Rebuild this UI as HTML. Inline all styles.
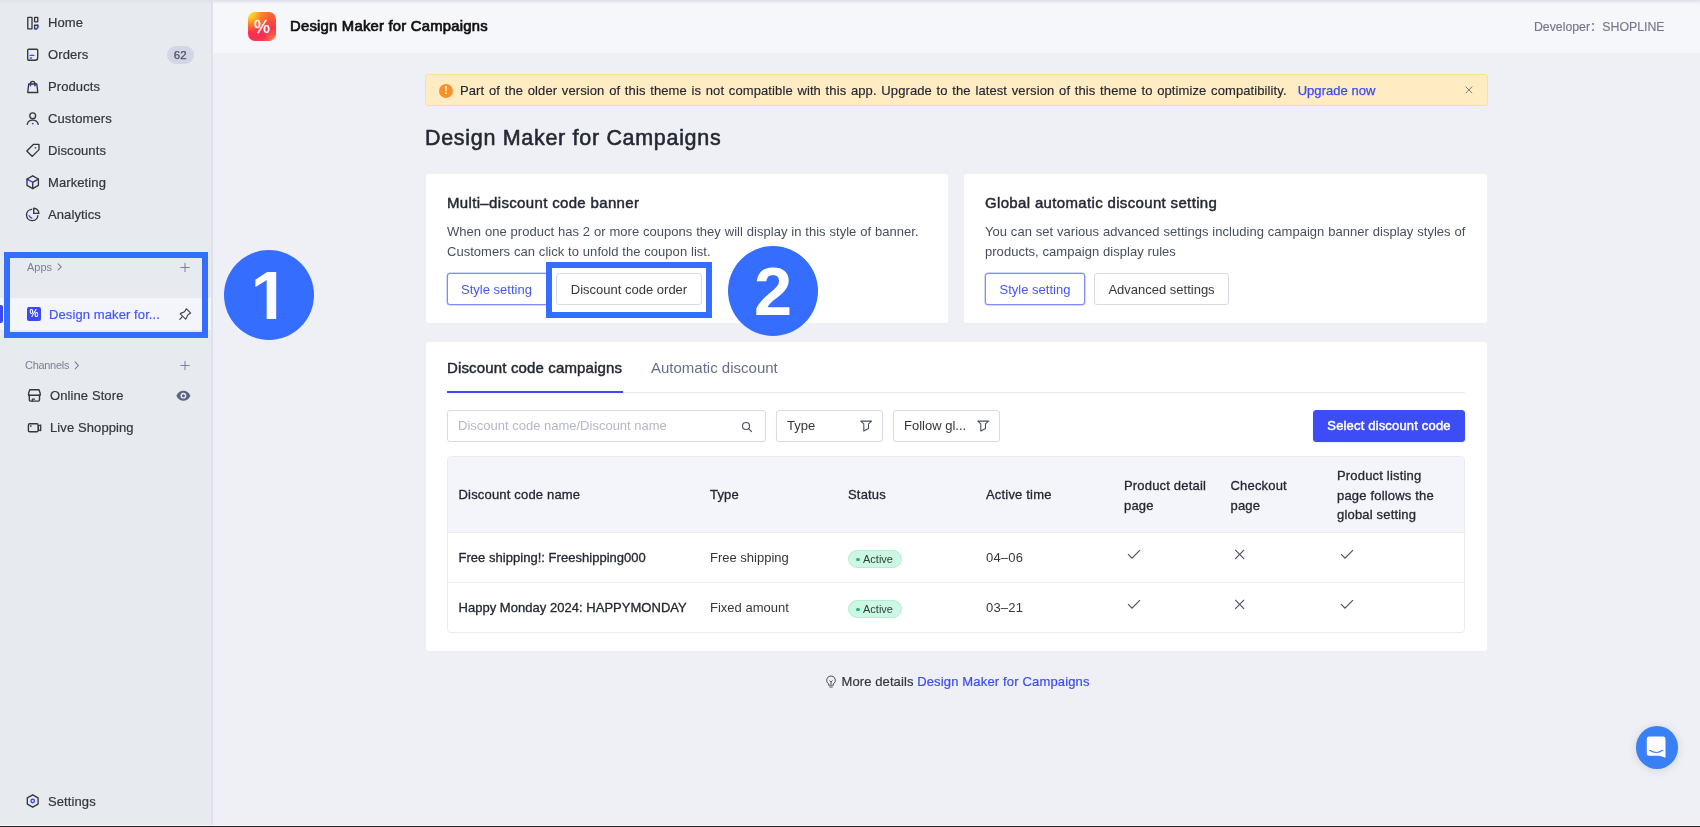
<!DOCTYPE html>
<html lang="en">
<head>
<meta charset="utf-8">
<title>Design Maker for Campaigns</title>
<style>
*{box-sizing:border-box;margin:0;padding:0}
html,body{width:1700px;height:827px;overflow:hidden}
body{font-family:"Liberation Sans","Noto Sans CJK SC",sans-serif;background:#eff0f5;color:#242833;font-size:13px;position:relative;will-change:transform}
a{text-decoration:none;color:#3a4af5}
.abs{position:absolute}
.m{font-weight:normal!important;-webkit-text-stroke:.3px currentColor}
/* sidebar */
#side{position:absolute;left:0;top:0;width:213px;height:827px;background:#e7eaef;border-right:2px solid #dfe1ee}
.badge{position:absolute;left:166.5px;top:46px;width:27.5px;height:18px;border-radius:9px;background:#d3d6e6;color:#4a5063;font-size:11.5px;text-align:center;line-height:19px;-webkit-text-stroke:.25px #4a5063}
.sec{position:absolute;font-size:11px;color:#7a8094}
#active{position:absolute;left:0;top:298px;width:211px;height:32px;background:#f4f5fa}
#activebar{position:absolute;left:0;top:305px;width:3px;height:18px;background:#3a4af5;border-radius:0 2px 2px 0}
.navt{position:absolute;left:48px;height:20px;line-height:20px;font-size:13px;color:#33373f;white-space:nowrap;-webkit-text-stroke:.2px currentColor;letter-spacing:.1px}
#mini{position:absolute;left:27px;top:307px;width:14px;height:14px;border-radius:2px;background:#3a4af5;color:#fff;font-size:10px;font-weight:bold;text-align:center;line-height:14px}
/* header */
#hdr{position:absolute;left:213px;top:0;width:1487px;height:53px;background:#f6f7fb}
#topshade{position:absolute;left:0;top:0;width:1700px;height:4px;background:linear-gradient(#dfe1e8,rgba(223,225,232,0));}
#appicon{position:absolute;left:248px;top:12px;width:28px;height:29px;border-radius:7px;background:radial-gradient(circle at 6% 4%,#ffe52e 0,#ffc02a 14%,rgba(255,150,40,.6) 30%,rgba(255,120,40,0) 50%),radial-gradient(circle at 100% 100%,#ffa03c 0,rgba(255,130,60,.6) 15%,rgba(255,120,60,0) 32%),linear-gradient(172deg,#f9782b 0,#f6553a 35%,#f7384a 55%,#fb2d55 78%,#f8404a 100%);color:#fff;font-size:18px;text-align:center;line-height:31px;-webkit-text-stroke:.3px #fff}
#hdr h1{position:absolute;left:77px;top:17px;font-size:14.8px;line-height:18px;color:#111;letter-spacing:.24px;-webkit-text-stroke-width:.7px!important}
#dev{position:absolute;right:35.5px;top:18px;-webkit-text-stroke:.15px #73788c;font-size:12.3px;line-height:18px;color:#73788c}
/* content */
#alert{position:absolute;left:425px;top:74px;width:1063px;height:32px;background:#ffecc3;border:1px solid #ffdf9e;border-radius:3px}
#alert .ic{position:absolute;left:13px;top:8.5px;width:14px;height:14px;border-radius:50%;background:#f8912a;color:#fff;font-size:10px;font-weight:bold;text-align:center;line-height:14px}
#alert .tx{position:absolute;left:34px;top:8px;font-size:13px;color:#23262f;-webkit-text-stroke:.15px #23262f;white-space:nowrap;letter-spacing:.1px;word-spacing:.98px}
#alert .x{position:absolute;right:13.5px;top:10px;width:10px;height:10px}
h2{position:absolute;left:425px;top:125px;font-size:21.5px;line-height:26px;color:#242833;letter-spacing:.69px;-webkit-text-stroke-width:.55px!important}
.card{position:absolute;background:#fff;border-radius:3px}
.card h3{position:absolute;left:21px;top:20px;font-size:15px;color:#242833;letter-spacing:.34px;-webkit-text-stroke-width:.45px!important;white-space:nowrap}
.card p{position:absolute;left:21px;letter-spacing:.03px;word-spacing:.2px;top:48px;font-size:13px;line-height:20px;color:#474f5e;white-space:nowrap}
.btn{position:absolute;height:32px;border:1px solid #d7dbe7;border-radius:3px;background:#fff;font-size:13px;line-height:32px;text-align:center;color:#33373f;white-space:nowrap}
.btn.pri{border-color:#7f8cfa;color:#4556f6;box-shadow:0 0 0 .5px #aab2fc}
.btn.solid{background:#3c4df6;border-color:#3c4df6;color:#fff;letter-spacing:.17px;-webkit-text-stroke-width:.45px!important;box-shadow:0 1px 2px rgba(58,74,245,.12)}
.inp{position:absolute;top:68px;height:32px;border:1px solid #d7dbe7;border-radius:3px;background:#fff;font-size:13px;line-height:30px;padding-left:10px;color:#33373f;white-space:nowrap}
#tbl{position:absolute;left:21px;top:114px;width:1018px;height:177px;border:1px solid #eaecf2;border-radius:4px;overflow:hidden}
.thead{position:absolute;left:0;top:0;width:1017px;height:75px;background:#f3f5fa}
.row{height:50px;border-top:1px solid #eaecf2}
.cell{line-height:20px;color:#33373f}
.cell.h{color:#242833;font-size:13px;letter-spacing:.18px;line-height:19.600px}
.cell.b{color:#242833;font-size:13px;letter-spacing:.03px}
#foot{position:absolute;left:824.500px;top:672px;font-size:13px;line-height:20px;color:#33373f;white-space:nowrap}
#chat{position:absolute;left:1635.500px;top:726px;width:42.600px;height:42.600px;border-radius:50%;background:#3880f4;box-shadow:0 1px 10px rgba(0,0,0,.12)}
#chat svg{position:absolute;left:-.6px;top:0}
/* annotations */
.hl{position:absolute;border:6px solid #356dff}
.circ{position:absolute;width:90px;height:90px;border-radius:50%;background:#356dff;color:#fff;font-weight:bold;font-size:68.5px;text-align:center;line-height:92px}
/* table */
#tabs .t{position:absolute;top:17px;font-size:15px;white-space:nowrap}
.row{position:absolute;left:0;width:1017px}
.cell{position:absolute;white-space:nowrap;font-size:13px}
.tag{position:absolute;left:400px;width:54px;height:18px;border-radius:9px;background:#cdf6e3;border:1px solid #b4eed4;color:#2a4038;font-size:11px;line-height:16px;padding-left:14px}
.tag:before{content:"";position:absolute;left:7px;top:6.5px;width:3.5px;height:3.5px;border-radius:50%;background:#22b573}
#bottomline{position:absolute;left:0;top:825px;width:1700px;height:2px;background:#242424;border-top:1px solid #f6f7fb}
</style>
</head>
<body>
<div id="side"></div>
<div id="active"></div><div id="activebar"></div>
<svg class="abs" style="left:0;top:0" width="212" height="827" viewBox="0 0 212 827" fill="none" stroke="#33373f" stroke-width="1.35" stroke-linejoin="round" stroke-linecap="round">
<!-- home -->
<rect x="27.8" y="17.3" width="4.2" height="11.6" rx=".5"/>
<rect x="34.6" y="17.3" width="3.2" height="4.6" rx=".4"/>
<path d="M37.8 25.2V26.4" /><path d="M37.8 25.2H34.6V28.9H36.2" />
<path d="M38 26.2q0 2.6-2.4 2.7" stroke="#3a4af5" stroke-width="1.6"/>
<!-- orders -->
<path d="M28.6 49.2h8.2q.9 0 .9.9v7.6q0 2.5-2.5 2.5h-6.6q-.9 0-.9-.9v-9.2q0-.9.9-.9z"/>
<path d="M30.2 55.4h3.6" stroke="#3a4af5" stroke-width="1.3"/><path d="M30.4 57.9h1" stroke="#3a4af5" stroke-width="1.5"/>
<!-- products -->
<path d="M28.7 84h8.1l1 8.5h-10.1z"/><path d="M30.5 85.6v-2.1a2.2 2.2 0 0 1 4.4 0v2.1"/>
<path d="M30.4 85.2v.6M35 85.2v.6" stroke="#3a4af5" stroke-width="1.4"/>
<!-- customers -->
<circle cx="32.7" cy="115.8" r="2.9"/><path d="M27.2 124.3c.5-2.6 2.6-4.2 5.5-4.200s5 1.600 5.500 4.200"/>
<circle cx="32.7" cy="123.600" r=".9" fill="#3a4af5" stroke="none"/>
<!-- discounts -->
<path d="M33.6 144.300h5.400v5.300l-6.700 6.800-5.500-5.500z"/><circle cx="35.400" cy="147.800" r=".9" fill="#3a4af5" stroke="none"/>
<!-- marketing -->
<path d="M32.700 175.800l5.700 3.200v6.400l-5.700 3.300-5.700-3.300v-6.400z"/><path d="M38.300 179.100l-5.600 3.200v6.200"/><path d="M27.400 179.300l5.200 2.900" stroke="#3a4af5"/><path d="M27.200 179.200l.8.450"/>
<!-- analytics -->
<path d="M31.600 209.300a5.700 5.700 0 1 0 6.300 6.300"/><path d="M33.700 208.200a5.200 5.200 0 0 1 5.200 5.200h-5.200z"/>
<path d="M29.100 215.700q.9 1.900 2.700 2.500" stroke="#3a4af5"/>
<!-- settings -->
<path d="M32.700 794.800l5.400 3.100v6.200l-5.400 3.100-5.400-3.100v-6.200z"/><circle cx="32.700" cy="801" r="1.700" stroke="#3a4af5" stroke-width="1.400"/>
<!-- online store -->
<path d="M29.800 389.800h9.200l1.200 3.600v1.800h-11.600v-1.800z" stroke-width="1.400"/><path d="M29.300 395.300v4.800q0 1 1 1h8.200q1 0 1-1v-4.800" stroke-width="1.400"/><path d="M32.300 401v-1.800h2.200" stroke-width="1.300"/>
<!-- live -->
<rect x="28.400" y="423.800" width="9.800" height="8" rx="1.400" stroke-width="1.400"/><path d="M38.400 425.800l2.300-.8v5.600l-2.300-.8z" stroke-width="1.300"/><path d="M30.500 426h.6" stroke-width="1.300"/>
<!-- chevrons + plus -->
<g stroke="#7a8094" stroke-width="1.100"><path d="M58.200 263.800l3 3-3 3"/><path d="M75.200 362l3.200 3.400-3.200 3.400"/>
<path d="M185 263.300v8.400M180.800 267.500h8.400" stroke-width="1"/><path d="M185 361.300v8.400M180.800 365.500h8.400" stroke-width="1"/></g>
<!-- pin -->
<path d="M186.300 308.700L190.700 313.100Q187.500 314.600 187.100 316.300Q186.900 317.900 185.700 319.100L180.200 313.800Q181.600 312.700 183.200 312.400Q184.900 312 186.300 308.700Z" stroke="#3c414d" stroke-width="1.100"/><path d="M182.100 316.900l-2.300 2.500" stroke="#3c414d" stroke-width="1.200"/>
<!-- eye -->
<path d="M176.400 395.700c1.500-3.200 4-5 7-5s5.500 1.800 7 5c-1.500 3.200-4 5-7 5s-5.500-1.800-7-5z" fill="#5d6480" stroke="none"/><circle cx="183.400" cy="395.700" r="2.900" fill="#e8eaf0" stroke="none"/><circle cx="183.400" cy="395.700" r="1.500" fill="#5d6480" stroke="none"/>
</svg>
<div class="navt" style="top:13px">Home</div>
<div class="navt" style="top:45px">Orders</div>
<div class="badge">62</div>
<div class="navt" style="top:77px">Products</div>
<div class="navt" style="top:109px">Customers</div>
<div class="navt" style="top:141px">Discounts</div>
<div class="navt" style="top:173px">Marketing</div>
<div class="navt" style="top:205px">Analytics</div>
<div class="sec" style="left:27px;top:261px">Apps</div>
<div id="mini">%</div>
<div class="navt" style="left:49px;top:305px;color:#4556f6;">Design maker for...</div>
<div class="sec" style="left:25px;top:359px;letter-spacing:-.3px">Channels</div>
<div class="navt" style="left:50px;top:386px">Online Store</div>
<div class="navt" style="left:50px;top:418px">Live Shopping</div>
<div class="navt" style="top:792px">Settings</div>
<div id="hdr">
  <h1 class="m">Design Maker for Campaigns</h1>
  <div id="dev">Developer：SHOPLINE</div>
</div>
<div id="appicon">%</div>
<div id="alert"><div class="ic">!</div><div class="tx">Part of the older version of this theme is not compatible with this app. Upgrade to the latest version of this theme to optimize compatibility.<a style="margin-left:11px;letter-spacing:.05px;word-spacing:0;-webkit-text-stroke:.25px #3a4af5">Upgrade now</a></div>
<svg class="x" viewBox="0 0 10 10"><path d="M1.600 1.600l6.600 6.600M8.200 1.600l-6.600 6.600" stroke="#70747f" stroke-width=".95" fill="none"/></svg></div>
<h2 class="m">Design Maker for Campaigns</h2>
<div class="card" style="left:426px;top:174px;width:522px;height:149px">
 <h3 class="m">Multi–discount code banner</h3>
 <p>When one product has 2 or more coupons they will display in this style of banner.<br>Customers can click to unfold the coupon list.</p>
 <div class="btn pri" style="left:21px;top:99px;width:101px;padding-right:2px">Style setting</div>
 <div class="btn" style="left:130px;top:99px;width:146px">Discount code order</div>
</div>
<div class="card" style="left:964px;top:174px;width:523px;height:149px">
 <h3 class="m">Global automatic discount setting</h3>
 <p>You can set various advanced settings including campaign banner display styles of<br>products, campaign display rules</p>
 <div class="btn pri" style="left:21px;top:99px;width:100px">Style setting</div>
 <div class="btn" style="left:130px;top:99px;width:135px">Advanced settings</div>
</div>
<div class="card" id="tcard" style="left:426px;top:342px;width:1061px;height:309px">
 <div id="tabs">
  <div class="t m" style="left:21px;letter-spacing:.15px;-webkit-text-stroke-width:.45px!important;color:#242833">Discount code campaigns</div>
  <div class="t" style="left:225px;color:#676e8b">Automatic discount</div>
  <div class="abs" style="left:21px;top:50px;width:1018px;height:1px;background:#e8eaf0"></div>
  <div class="abs" style="left:21px;top:49px;width:176px;height:2px;background:#3a4af5"></div>
 </div>
 <div class="inp" style="left:21px;width:319px"><span style="color:#b3b8c8">Discount code name/Discount name</span>
  <svg class="abs" style="left:292.5px;top:9.5px" width="12" height="12" viewBox="0 0 12 12" fill="none" stroke="#4b5163" stroke-width="1.150"><circle cx="5" cy="5" r="3.500"/><path d="M7.600 7.600l3 3" stroke-linecap="round"/></svg></div>
 <div class="inp" style="left:350px;width:107px"><span>Type</span>
  <svg class="abs flt" style="left:83px;top:9px" width="13" height="13" viewBox="0 0 13 13" fill="none" stroke="#4b5163" stroke-width="1.100" stroke-linejoin="round"><path d="M.8 1.100h10.800l-3.100 2.700v4.700l-4.700 2.600v-7.300z"/></svg></div>
 <div class="inp" style="left:467px;width:107px"><span>Follow gl...</span>
  <svg class="abs flt" style="left:83px;top:9px" width="13" height="13" viewBox="0 0 13 13" fill="none" stroke="#4b5163" stroke-width="1.100" stroke-linejoin="round"><path d="M.8 1.100h10.800l-3.100 2.700v4.700l-4.700 2.600v-7.300z"/></svg></div>
 <div class="btn solid m" style="left:887px;top:68px;width:152px;height:32px;line-height:30px">Select discount code</div>
 <div id="tbl">
  <div class="thead">
   <div class="cell h m" style="left:10.5px;top:28px">Discount code name</div>
   <div class="cell h m" style="left:262px;top:28px">Type</div>
   <div class="cell h m" style="left:400px;top:28px">Status</div>
   <div class="cell h m" style="left:538px;top:28px">Active time</div>
   <div class="cell h m" style="left:676px;top:19px">Product detail<br>page</div>
   <div class="cell h m" style="left:782.5px;top:19px">Checkout<br>page</div>
   <div class="cell h m" style="left:889px;top:9px">Product listing<br>page follows the<br>global setting</div>
  </div>
  <div class="row" style="top:75px">
   <div class="cell b m" style="left:10.5px;top:15px">Free shipping!: Freeshipping000</div>
   <div class="cell" style="left:262px;top:15px">Free shipping</div>
   <div class="tag" style="top:17px">Active</div>
   <div class="cell" style="left:538px;top:15px"><span style="letter-spacing:.2px">04–06</span></div>
   <svg class="abs" style="left:679px;top:16px" width="14" height="11" viewBox="0 0 14 11"><path d="M1 5.200l4 4 8-8" fill="none" stroke="#4b5163" stroke-width="1.200"/></svg>
   <svg class="abs" style="left:786px;top:16px" width="12" height="11" viewBox="0 0 12 11"><path d="M1.200 .900l8.900 8.900M10.100 .900l-8.900 8.900" fill="none" stroke="#4b5163" stroke-width="1.150"/></svg>
   <svg class="abs" style="left:892px;top:16px" width="14" height="11" viewBox="0 0 14 11"><path d="M1 5.200l4 4 8-8" fill="none" stroke="#4b5163" stroke-width="1.200"/></svg>
  </div>
  <div class="row" style="top:125px">
   <div class="cell b m" style="left:10.5px;top:15px">Happy Monday 2024: HAPPYMONDAY</div>
   <div class="cell" style="left:262px;top:15px">Fixed amount</div>
   <div class="tag" style="top:17px">Active</div>
   <div class="cell" style="left:538px;top:15px"><span style="letter-spacing:.2px">03–21</span></div>
   <svg class="abs" style="left:679px;top:16px" width="14" height="11" viewBox="0 0 14 11"><path d="M1 5.200l4 4 8-8" fill="none" stroke="#4b5163" stroke-width="1.200"/></svg>
   <svg class="abs" style="left:786px;top:16px" width="12" height="11" viewBox="0 0 12 11"><path d="M1.200 .900l8.900 8.900M10.100 .900l-8.900 8.900" fill="none" stroke="#4b5163" stroke-width="1.150"/></svg>
   <svg class="abs" style="left:892px;top:16px" width="14" height="11" viewBox="0 0 14 11"><path d="M1 5.200l4 4 8-8" fill="none" stroke="#4b5163" stroke-width="1.200"/></svg>
  </div>
 </div>
</div>
<div id="foot"><svg width="12" height="13" viewBox="0 0 12 13" fill="none" stroke="#4b5163" stroke-width="1" style="vertical-align:-2px;margin-right:5px"><path d="M6 1a4.300 4.300 0 0 0-2.400 7.900v1.300h4.800v-1.300a4.300 4.300 0 0 0-2.400-7.900z"/><path d="M4.300 12h3.400M4.500 5.500l1.500 1.500 1.500-1.500M6 7v2.500"/></svg><span style="letter-spacing:.1px;-webkit-text-stroke:.2px #33373f">More details</span> <a style="letter-spacing:.16px;-webkit-text-stroke:.2px #3a4af5">Design Maker for Campaigns</a></div>
<div class="hl" style="left:4px;top:252px;width:204px;height:86px"></div>
<div class="circ" style="left:224px;top:250px;text-indent:1.4px">1</div><svg class="abs" style="left:224px;top:250px" width="90" height="90" viewBox="0 0 90 90"><rect x="27" y="62" width="15.670" height="8" fill="#356dff"/><rect x="52.190" y="62" width="14" height="8" fill="#356dff"/></svg>
<div class="hl" style="left:546px;top:262px;width:166px;height:56px"></div>
<div class="circ" style="left:728px;top:246px">2</div>
<div id="chat"><svg width="43" height="43" viewBox="0 0 43 43"><path d="M14.300 10.600h13.700a2.500 2.500 0 0 1 2.500 2.500v18.700l-6-2.100h-10.200a2.500 2.500 0 0 1-2.500-2.500v-14.100a2.500 2.500 0 0 1 2.500-2.500z" fill="#fff"/><path d="M14.600 24.300q6.600 4.400 13.200 0" stroke="#3b82f6" stroke-width="1.200" fill="none" stroke-linecap="round"/></svg></div>
<div id="topshade"></div>
<div id="bottomline"></div>
</body>
</html>
